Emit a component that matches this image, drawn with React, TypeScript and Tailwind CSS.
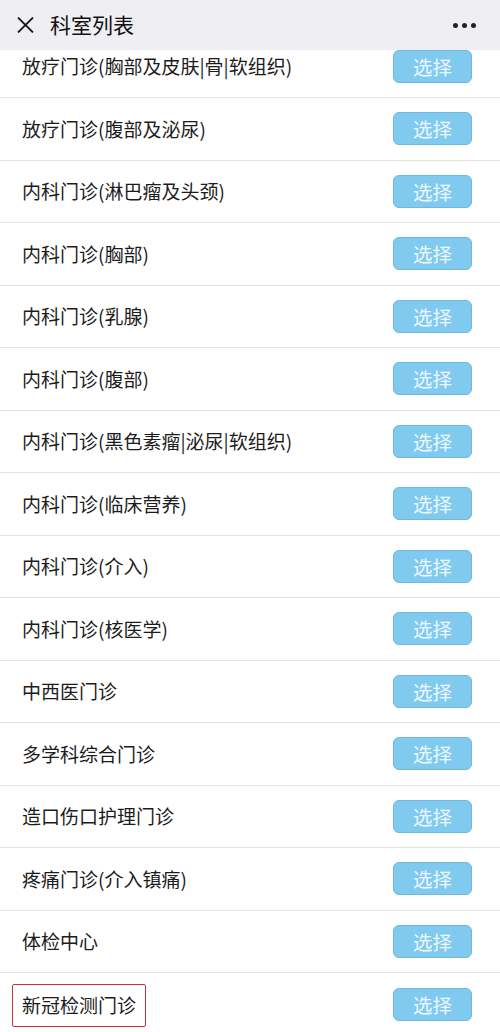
import React from "react";

const departments = [
  "放疗门诊(胸部及皮肤|骨|软组织)",
  "放疗门诊(腹部及泌尿)",
  "内科门诊(淋巴瘤及头颈)",
  "内科门诊(胸部)",
  "内科门诊(乳腺)",
  "内科门诊(腹部)",
  "内科门诊(黑色素瘤|泌尿|软组织)",
  "内科门诊(临床营养)",
  "内科门诊(介入)",
  "内科门诊(核医学)",
  "中西医门诊",
  "多学科综合门诊",
  "造口伤口护理门诊",
  "疼痛门诊(介入镇痛)",
  "体检中心",
  "新冠检测门诊",
];

const App = () => {
  return (
    <div
      className="w-[500px] h-[1032px] overflow-hidden bg-white flex flex-col"
      style={{ fontFamily: '"Noto Sans CJK SC", "Noto Sans", sans-serif' }}
    >
      {/* header */}
      <div className="relative z-10 h-[50px] shrink-0 bg-[#efeef3] flex items-center justify-between pl-[17px] pr-[24px]">
        <div className="flex items-center">
          <svg width="17" height="16" viewBox="0 0 17 16" className="text-[#1a1a1a]">
            <path d="M1 0.5 L16 15.5 M16 0.5 L1 15.5" stroke="currentColor" strokeWidth="1.8" />
          </svg>
          <span className="ml-[16px] text-[21px] leading-none text-[#111] -mt-[2px]">科室列表</span>
        </div>
        <div className="flex gap-[4px]">
          <span className="w-[5px] h-[5px] rounded-full bg-[#222]" />
          <span className="w-[5px] h-[5px] rounded-full bg-[#222]" />
          <span className="w-[5px] h-[5px] rounded-full bg-[#222]" />
        </div>
      </div>

      {/* list, scrolled a bit under the header */}
      <div className="-mt-[14.5px] flex flex-col">
        {departments.map((name, i) => (
          <div
            key={name}
            className={
              "h-[62.5px] shrink-0 flex items-center justify-between pl-[22px] pr-[28px] " +
              (i < departments.length - 1 ? "border-b border-[#e4e4e4]" : "")
            }
          >
            {i === departments.length - 1 ? (
              <span className="-ml-[10px] mt-[2px] h-[43px] w-[134px] pl-[9px] flex items-center border-[1.5px] border-[#c5333f] rounded-[2px] text-[19px] text-[#1c1c1c]">
                {name}
              </span>
            ) : (
              <span className="text-[19px] text-[#1c1c1c]">{name}</span>
            )}
            <button className="w-[79px] h-[33px] rounded-[6px] bg-[#80caef] border border-[#6fb7de] text-[19.5px] text-[#eef8ff] leading-none">
              选择
            </button>
          </div>
        ))}
      </div>
    </div>
  );
};

export default App;
